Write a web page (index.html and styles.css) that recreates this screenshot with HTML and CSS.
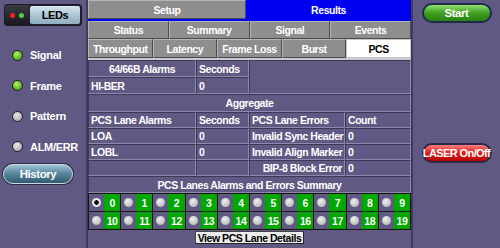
FILE: index.html
```html
<!DOCTYPE html>
<html lang="en">
<head>
  <meta charset="UTF-8">
  <title>PCS Results</title>
  <link rel="stylesheet" href="styles.css">
</head>
<body>
  <div class="screen">
    <aside class="side">
      <div class="leds-btn">
        <span class="leds-lamps"><i class="dot red"></i><i class="dot green"></i></span>
        <span class="leds-label">LEDs</span>
      </div>
      <ul class="led-list">
        <li><i class="led on"></i>Signal</li>
        <li><i class="led on"></i>Frame</li>
        <li><i class="led"></i>Pattern</li>
        <li><i class="led"></i>ALM/ERR</li>
      </ul>
      <div class="pill history">History</div>
    </aside>

    <main class="main">
      <div class="tabs top">
        <div class="tab">Setup</div>
        <div class="tab active-blue">Results</div>
      </div>
      <div class="tabs four">
        <div class="tab">Status</div>
        <div class="tab">Summary</div>
        <div class="tab">Signal</div>
        <div class="tab">Events</div>
      </div>
      <div class="tabs five">
        <div class="tab">Throughput</div>
        <div class="tab">Latency</div>
        <div class="tab">Frame Loss</div>
        <div class="tab">Burst</div>
        <div class="tab active">PCS</div>
      </div>

      <div class="grid alarms">
        <div class="cell center">64/66B Alarms</div>
        <div class="cell">Seconds</div>
        <div class="cell blank"></div>
        <div class="cell">HI-BER</div>
        <div class="cell">0</div>
      </div>

      <div class="cell wide center">Aggregate</div>

      <div class="grid lanes-table">
        <div class="cell">PCS Lane Alarms</div>
        <div class="cell">Seconds</div>
        <div class="cell">PCS Lane Errors</div>
        <div class="cell">Count</div>

        <div class="cell">LOA</div>
        <div class="cell">0</div>
        <div class="cell">Invalid Sync Header</div>
        <div class="cell">0</div>

        <div class="cell">LOBL</div>
        <div class="cell">0</div>
        <div class="cell">Invalid Align Marker</div>
        <div class="cell">0</div>

        <div class="cell"></div>
        <div class="cell"></div>
        <div class="cell right">BIP-8 Block Error</div>
        <div class="cell">0</div>
      </div>

      <div class="cell wide center summary">PCS Lanes Alarms and Errors Summary</div>

      <div class="lane-grid" id="lane-grid"></div>

      <div class="details-row">
        <button class="details-btn">View PCS Lane Details</button>
      </div>
    </main>

    <aside class="side-right">
      <div class="pill start">Start</div>
      <div class="pill laser">LASER On/Off</div>
    </aside>
  </div>

  <script>
    const laneGrid = document.getElementById("lane-grid");
    for (let i = 0; i < 20; i++) {
      const lane = document.createElement("div");
      lane.className = "lane";
      lane.innerHTML = `<span class="radio${i === 0 ? " checked" : ""}"></span><span class="num">${i}</span>`;
      laneGrid.appendChild(lane);
    }
  </script>
</body>
</html>
```

FILE: styles.css
```css
body {
  margin: 0;
  background-color: #5f5984;
  font-family: "Liberation Sans", Arial, sans-serif;
  font-size: 10.5px;
  font-weight: bold;
  letter-spacing: -0.45px;
  color: #ffffff;
}

.screen {
  display: flex;
  width: 500px;
  height: 248px;
  overflow: hidden;
}

/* left column */
.side {
  width: 86px;
  padding: 4px 0 0 4px;
  box-sizing: border-box;
}

.leds-btn {
  display: flex;
  width: 78px;
  height: 22px;
  box-sizing: border-box;
  border: 1px solid #1b1b26;
  border-radius: 3px;
  background: #22222c;
  overflow: hidden;
}

.leds-lamps {
  display: flex;
  align-items: center;
  gap: 4px;
  padding-left: 5px;
  width: 19px;
  border-radius: 2px 0 0 2px;
  background: linear-gradient(#3a3a44, #18181e);
}

.dot {
  width: 5px;
  height: 5px;
  border-radius: 50%;
}

.dot.red { background: #ff2020; }
.dot.green { background: #4fd040; }

.leds-label {
  flex: 1;
  display: flex;
  align-items: center;
  justify-content: center;
  margin: 1px;
  border-radius: 2px;
  color: #000;
  font-size: 11px;
  background: linear-gradient(#d6e6ee, #a9c4d2 55%, #8eaec0);
}

.led-list {
  list-style: none;
  margin: 0;
  padding: 14px 0 0 8px;
}

.led-list li {
  display: flex;
  align-items: center;
  height: 30.5px;
  font-size: 11px;
  letter-spacing: -0.3px;
}

.led {
  width: 9px;
  height: 9px;
  margin-right: 7px;
  border: 1px solid #1f1d2a;
  border-radius: 50%;
  background: radial-gradient(circle at 40% 35%, #e6e6e6, #a0a0a0);
}

.led.on {
  background: radial-gradient(circle at 40% 35%, #b8f070, #4fb410 70%);
}

.pill {
  display: flex;
  align-items: center;
  justify-content: center;
  box-sizing: border-box;
  border-radius: 10px;
  color: #fff;
}

.history {
  width: 70px;
  height: 20px;
  margin: 2px 0 0 -1px;
  border: 1px solid #cdd6e0;
  box-shadow: 0 0 0 1px #2b2a3e;
  background: linear-gradient(#9fc3d6, #5a8aa0 45%, #2f5a70);
  font-size: 11.5px;
}

/* main column */
.main {
  width: 327px;
  border-left: 2px solid #3f3b5a;
  border-right: 2px solid #3f3b5a;
  box-sizing: border-box;
}

.tabs {
  display: grid;
}

.tabs.top {
  grid-template-columns: 158px 1fr;
  height: 21px;
  border-bottom: 2px solid #0000f0;
  box-sizing: border-box;
}

.tabs.four {
  grid-template-columns: repeat(4, 1fr);
  height: 18px;
}

.tabs.five {
  grid-template-columns: repeat(5, 1fr);
  height: 19px;
  border-bottom: 2px solid #c9c9d2;
}

.tab {
  display: flex;
  align-items: center;
  justify-content: center;
  background: #8e8e8e;
  border: 1px solid #4b4b4b;
  border-top-color: #b4b4b4;
  border-left-color: #b4b4b4;
  color: #fff;
}

.tab.active-blue {
  background: #0000f0;
  border-color: #0000f0;
}

.tab.active {
  background: #ffffff;
  color: #000;
  border-color: #c8c8c8;
}

.grid {
  display: grid;
}

.alarms {
  grid-template-columns: 108px 53px 1fr;
  grid-template-rows: 17px 17px;
}

.alarms .blank {
  grid-row: 1 / 3;
  grid-column: 3;
}

.lanes-table {
  grid-template-columns: 108px 53px 96px 1fr;
  grid-auto-rows: 16px;
}

.cell {
  display: flex;
  align-items: center;
  padding: 0 2px;
  border: 1px solid #3c3858;
  border-right-color: #8d89a8;
  border-bottom-color: #8d89a8;
  box-sizing: border-box;
  white-space: nowrap;
}

.cell.center { justify-content: center; }
.cell.right { justify-content: flex-end; }

.cell.wide {
  height: 18px;
}

.cell.summary {
  height: 17px;
}

.lane-grid {
  display: grid;
  grid-template-columns: repeat(10, 1fr);
  border: 1px solid #141414;
  background: #141414;
  gap: 1px;
}

.lane {
  display: flex;
  height: 17px;
  background: #5f5984;
}

.radio {
  width: 9px;
  height: 9px;
  margin: 4px 3px 0 3px;
  border-radius: 50%;
  background: radial-gradient(circle at 40% 35%, #f0f0f0, #a8a8a8);
}

.radio.checked {
  background: radial-gradient(circle, #000 0 2px, #e8e8e8 2.5px);
}

.num {
  flex: 1;
  display: flex;
  align-items: center;
  justify-content: center;
  background: #00a800;
}

.details-row {
  display: flex;
  justify-content: center;
  padding-top: 1px;
}

.details-btn {
  height: 13px;
  padding: 0 2px;
  border: 1px solid #444;
  border-right-color: #222;
  border-bottom-color: #222;
  background: #ececec;
  font-family: "Liberation Sans", Arial, sans-serif;
  font-size: 10.5px;
  font-weight: bold;
  letter-spacing: -0.45px;
  line-height: 10px;
  color: #000;
}

/* right column */
.side-right {
  flex: 1;
  display: flex;
  flex-direction: column;
  align-items: center;
  padding-top: 3px;
}

.start {
  width: 70px;
  height: 20px;
  border: 2px solid #1e2c48;
  background: linear-gradient(#8fe070, #3ea020 50%, #2a8010);
  font-size: 11.5px;
}

.laser {
  width: 70px;
  height: 20px;
  margin-top: 120px;
  border: 2px solid #2a2a48;
  background: linear-gradient(#ff8080, #e01818 50%, #b80000);
  font-size: 11px;
  letter-spacing: -0.6px;
  white-space: nowrap;
}
```
